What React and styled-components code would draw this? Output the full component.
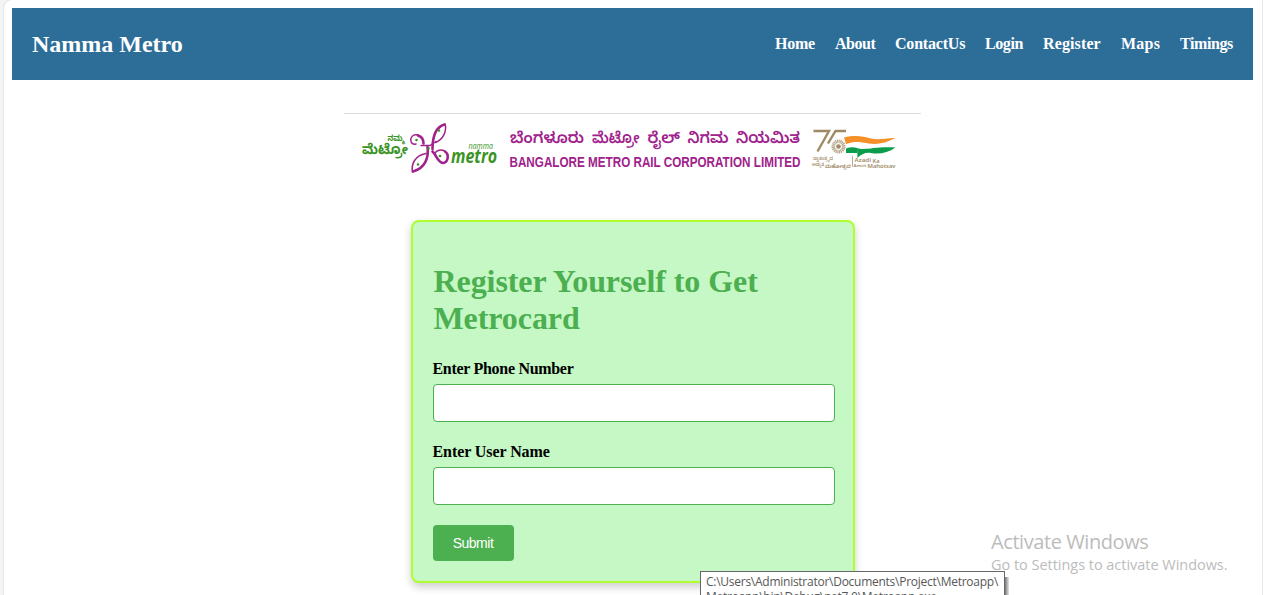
import React from "react";
import styled, { createGlobalStyle } from "styled-components";

const serif = `"Liberation Serif", "Times New Roman", serif`;

const GlobalStyle = createGlobalStyle`
  html { background: #f4f4f5; }
  body { margin: 0; font-family: ${serif}; font-size: 16px; color: #000; }
  #root { height: 595px; overflow: hidden; }
`;

const Page = styled.div`
  box-sizing: border-box;
  height: 620px;
  margin: 0 1px 0 4px;
  padding: 8px 9px 0 8px;
  background: #fff;
  border-radius: 8px 0 0 0;
  box-shadow: 0 0 2px rgba(0, 0, 0, 0.2);
`;

const Header = styled.header`
  display: flex;
  align-items: center;
  justify-content: space-between;
  box-sizing: border-box;
  height: 72px;
  padding: 0 20px;
  background: #2d6e99;
  color: #fff;
`;

const Brand = styled.div`
  font-size: 24px;
  font-weight: bold;
`;

const Nav = styled.nav`
  display: flex;
  gap: 20px;
`;

const NavLink = styled.a`
  width: ${(p) => p.$width}px;
  color: #fff;
  font-weight: bold;
  white-space: nowrap;
  letter-spacing: ${(p) => p.$spacing}px;
`;

const Banner = styled.svg`
  display: block;
  width: 577px;
  height: 70px;
  margin: 33px auto 37px;
`;

const Card = styled.form`
  box-sizing: border-box;
  width: 444px;
  height: 363px;
  margin: 0 auto;
  padding: 20px;
  background: #c5f8c5;
  border: 2px solid #adff2f;
  border-radius: 8px;
  box-shadow: 0 4px 8px rgba(0, 0, 0, 0.2);
`;

const Title = styled.h1`
  margin: 21px 0 22px;
  padding-left: 1px;
  color: #4caf50;
  font-size: 32px;
  line-height: 37px;
  letter-spacing: -0.08px;
`;

const Label = styled.label`
  display: block;
  margin-bottom: 5px;
  font-weight: bold;
  line-height: 20px;
  letter-spacing: ${(p) => p.$spacing}px;
`;

const Input = styled.input`
  display: block;
  box-sizing: border-box;
  width: 402px;
  height: 38px;
  margin: 0 0 20px;
  padding: 10px;
  background: #fff;
  border: 1px solid #4caf50;
  border-radius: 4px;
`;

const Submit = styled.button`
  display: block;
  width: 81px;
  height: 36px;
  padding: 0;
  border: 0;
  border-radius: 4px;
  background: #4caf50;
  color: #fff;
  font: 14px "Liberation Sans", Arial, sans-serif;
  letter-spacing: -0.5px;
`;

const Watermark = styled.div`
  position: absolute;
  left: 991px;
  top: 530px;
  color: #bcbcbc;
  font-family: "Open Sans", "Noto Sans", sans-serif;
  white-space: nowrap;
`;

const WatermarkTitle = styled.div`
  font-size: 20px;
  line-height: 24px;
  letter-spacing: -0.42px;
`;

const WatermarkText = styled.div`
  font-size: 14.5px;
  line-height: 21px;
  letter-spacing: -0.03px;
`;

const Tooltip = styled.div`
  position: absolute;
  left: 700px;
  top: 571px;
  box-sizing: border-box;
  width: 305px;
  height: 24px;
  padding: 2px 5px 0;
  overflow: hidden;
  background: #fff;
  border: 1px solid #676767;
  border-bottom: 0;
  color: #575757;
  font: 12px/15px "Open Sans", "Noto Sans", sans-serif;
  letter-spacing: -0.26px;
  white-space: nowrap;
`;

const TooltipShadow = styled.div`
  position: absolute;
  left: 1005px;
  top: 577px;
  width: 4px;
  height: 18px;
  background: linear-gradient(to right, #777, #e5e5e5);
`;

const links = [
  ["Home", 40, -0.25],
  ["About", 40, -0.45],
  ["ContactUs", 70, -0.2],
  ["Login", 38, -0.4],
  ["Register", 58, 0.12],
  ["Maps", 39, 0.25],
  ["Timings", 53, -0.4],
];

const green = "#3a9425";
const purple = "#a0228c";
const gold = "#a08a66";
const kn = `"Noto Sans Kannada", "Noto Sans", sans-serif`;

const corporationWords = [
  ["ಬೆಂಗಳೂರು", 510, 74],
  ["ಮೆಟ್ರೋ", 592, 47.5],
  ["ರೈಲ್", 647.5, 32.5],
  ["ನಿಗಮ", 687.5, 41],
  ["ನಿಯಮಿತ", 736, 64],
];

function Fit({ x, y, w, size, children, ...rest }) {
  return (
    <text x={x} y={y} textLength={w} lengthAdjust="spacingAndGlyphs" fontSize={size} {...rest}>
      {children}
    </text>
  );
}

function MetroBanner() {
  return (
    <Banner viewBox="344 113 577 70">
      <path d="M344 113.500H921" stroke="#dddde0" />
      <g fill={green} fontFamily={kn} fontWeight="bold">
        <Fit x="387.5" y="140.500" w="17" size="8">ನಮ್ಮ</Fit>
        <Fit x="362" y="154" w="46" size="14">ಮೆಟ್ರೋ</Fit>
      </g>
      <g fill="none" stroke={purple} strokeLinecap="round" strokeLinejoin="round">
        <g strokeWidth="2.600">
          <path d="M418 135.500C421.500 136.500 423.500 139.500 423.500 143.500" />
          <path d="M444.500 124.500C436 127 432.500 136 432.500 149" />
          <path d="M427.500 147C429 158 425 168 413 171.500" />
          <path d="M445 151.500C450 155 447.500 163 443 163C437.500 162.500 436.500 155 432.500 151.500" />
        </g>
        <g strokeWidth="1.500">
          <path d="M418 135C412.500 133.500 410 138 411 141.500C412 144 414 144.500 416 144" />
          <path d="M445 124C447 131 443.500 139 435.500 142.500" />
          <path d="M412.500 172C411 164 415 155.500 426 153.500" />
          <path d="M444.500 151C441 149 436.500 150.500 435 153" />
          <path d="M421 145.500H430L436 141.500" />
        </g>
      </g>
      <g fill={green}>
        <circle cx="416.500" cy="140" r="1.300" />
        <circle cx="439" cy="130.500" r="1.300" />
        <circle cx="428.500" cy="148.500" r="1.300" />
        <circle cx="418" cy="164.500" r="1.300" />
        <circle cx="440" cy="156" r="1.300" />
      </g>
      <g fill={green} fontFamily='"Open Sans", sans-serif' fontStyle="italic">
        <Fit x="468.500" y="148.500" w="24.500" size="8.500">namma</Fit>
        <Fit x="451" y="162.500" w="46" size="19" fontWeight="bold">metro</Fit>
      </g>
      <g fill={purple}>
        {corporationWords.map(([word, x, w]) => (
          <Fit key={word} x={x} y="142.500" w={w} size="15.500" fontFamily={kn} fontWeight="600">{word}</Fit>
        ))}
        <Fit x="509.500" y="167" w="291" size="14.500" fontWeight="bold" fontFamily='"Liberation Sans", sans-serif'>
          BANGALORE METRO RAIL CORPORATION LIMITED
        </Fit>
      </g>
      <g fill="none" stroke={gold} strokeWidth="2.400">
        <path d="M813.500 131H829L817.500 151.500" />
        <path d="M846 131H835.500L828 143.500" />
        <circle cx="838.500" cy="146.500" r="5.200" strokeWidth="3.600" strokeDasharray="1.100 .5" opacity=".75" />
      </g>
      <circle cx="838.500" cy="146.500" r="2.300" fill={gold} />
      <path d="M844 137.500C856 134.500 863 136.500 871 138.500C880 140.500 887 137.500 895.500 138C886 143 877 145 869 143.500C860 141.500 854 141 846 144Z" fill="#f58f28" />
      <path d="M846 148.500C850 147 854 147 857 148V153H846Z" fill="#0b9d4b" />
      <path d="M857 148C865 151 873 146.500 895.500 147.500C888 153 879 154.500 871 153C866 152 861 154 857.500 158Z" fill="#0b9d4b" />
      <path d="M852.500 156V167" stroke={gold} strokeWidth=".7" />
      <g fill={gold} fontFamily={kn} fontWeight="600">
        <Fit x="813" y="160" w="20" size="4.500">ಸ್ವಾತಂತ್ರ್ಯದ</Fit>
        <Fit x="812" y="166" w="12" size="4">ಅಮೃತ</Fit>
        <Fit x="825" y="167.500" w="25.500" size="5.500">ಮಹೋತ್ಸವ</Fit>
        <Fit x="854.500" y="161.500" w="16.500" size="6">Azadi</Fit>
        <Fit x="872.500" y="162.500" w="7" size="4.500">Ka</Fit>
        <Fit x="853.500" y="166.500" w="13" size="4">Amrit</Fit>
        <Fit x="867.500" y="168" w="28" size="5.500">Mahotsav</Fit>
      </g>
    </Banner>
  );
}

export default function App() {
  return (
    <>
      <GlobalStyle />
      <Page>
        <Header>
          <Brand>Namma Metro</Brand>
          <Nav>
            {links.map(([name, width, spacing]) => (
              <NavLink key={name} $width={width} $spacing={spacing}>{name}</NavLink>
            ))}
          </Nav>
        </Header>
        <MetroBanner />
        <Card>
          <Title>Register Yourself to Get Metrocard</Title>
          <Label $spacing={-0.3}>Enter Phone Number</Label>
          <Input />
          <Label $spacing={-0.08}>Enter User Name</Label>
          <Input />
          <Submit type="button">Submit</Submit>
        </Card>
      </Page>
      <Watermark>
        <WatermarkTitle>Activate Windows</WatermarkTitle>
        <WatermarkText>Go to Settings to activate Windows.</WatermarkText>
      </Watermark>
      <TooltipShadow />
      <Tooltip>
        C:\Users\Administrator\Documents\Project\Metroapp\<br />
        Metroapp\bin\Debug\net7.0\Metroapp.exe
      </Tooltip>
    </>
  );
}
